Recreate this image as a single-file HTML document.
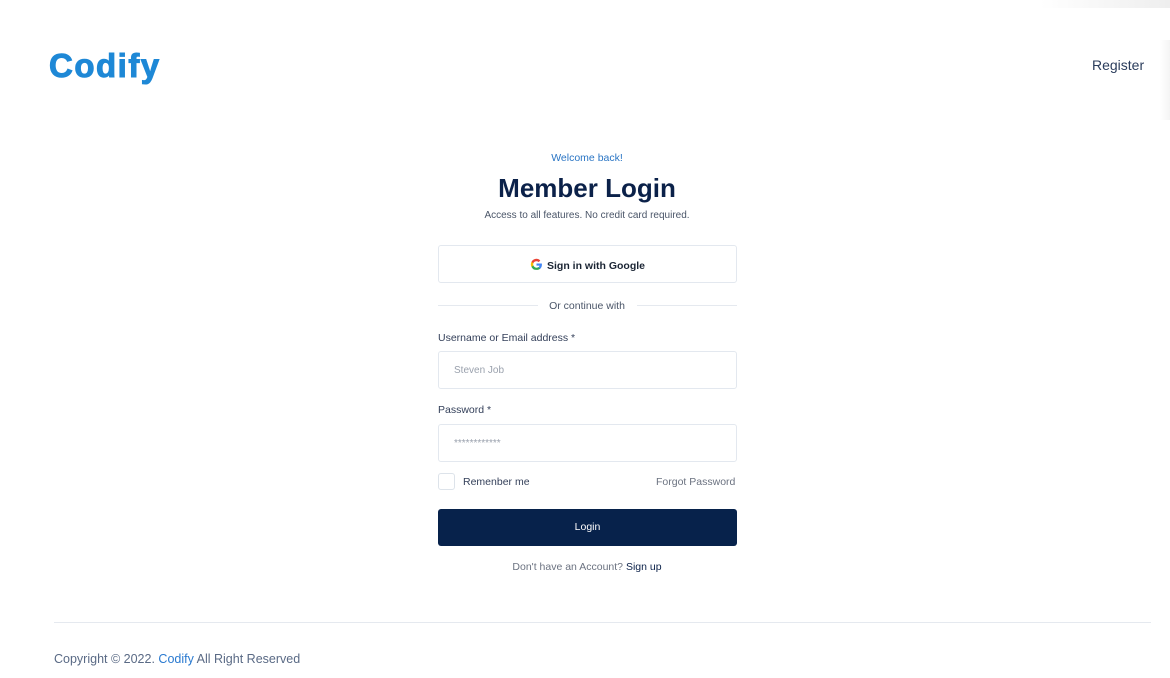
<!DOCTYPE html>
<html><head><meta charset="utf-8"><style>
*{box-sizing:border-box;margin:0;padding:0}
body{width:1170px;height:678px;background:#fff;font-family:"Liberation Sans",sans-serif;position:relative;overflow:hidden;color:#0b2149}
.abs{position:absolute}
.logo{left:49px;top:47px;font-size:33px;font-weight:bold;color:#1e88d6;letter-spacing:1.5px;-webkit-text-stroke:1px #1e88d6}
.reg{left:1092px;top:57px;font-size:14px;color:#2b3d5c}
.c{left:0;width:1174px;text-align:center}
.box{border:1px solid #e3e8ef;border-radius:3px;left:438px;width:299px;height:38px;background:#fff}
.lbl{left:438px;font-size:10.5px;color:#34405a}
.ph{font-size:10px;color:#9aa1ad;left:15px;top:13px;position:absolute}
</style></head><body>
<div class="abs" style="left:1040px;top:0;width:130px;height:8px;background:linear-gradient(90deg,#fff,#eee)"></div>
<div class="abs" style="left:1160px;top:40px;width:10px;height:80px;background:linear-gradient(90deg,#fff,#f4f4f4)"></div>
<div class="abs logo">Codify</div>
<div class="abs reg">Register</div>
<div class="abs c" style="top:152px;font-size:10.5px;color:#2a75c4">Welcome back!</div>
<div class="abs c" style="top:173px;font-size:26px;font-weight:bold;color:#0b2149">Member Login</div>
<div class="abs c" style="top:210px;font-size:10px;color:#4a5568">Access to all features. No credit card required.</div>
<div class="abs box" style="top:245px"><div style="text-align:center;margin-top:12px;font-size:10.5px;font-weight:bold;color:#1a2433"><svg width="13" height="13" viewBox="0 0 24 24" style="vertical-align:-2px;margin-right:4px"><path d="M22 12.2c0-.7-.1-1.4-.2-2H12v3.9h5.6a4.8 4.8 0 0 1-2.1 3.1v2.6h3.4c2-1.8 3.1-4.5 3.1-7.6z" fill="#4285f4"/><path d="M12 22c2.8 0 5.2-.9 6.9-2.5l-3.4-2.6c-.9.6-2.1 1-3.5 1-2.7 0-5-1.8-5.8-4.3H2.7v2.7A10 10 0 0 0 12 22z" fill="#34a853"/><path d="M6.2 13.6a6 6 0 0 1 0-3.8V7.1H2.7a10 10 0 0 0 0 9.2z" fill="#fbbc05"/><path d="M12 6c1.5 0 2.9.5 4 1.5l3-3A10 10 0 0 0 2.7 7.1l3.5 2.7C7 7.4 9.3 6 12 6z" fill="#ea4335"/></svg>Sign in with Google</div></div>
<div class="abs" style="left:438px;top:305px;width:100px;height:1px;background:#e5e9ef"></div>
<div class="abs" style="left:637px;top:305px;width:100px;height:1px;background:#e5e9ef"></div>
<div class="abs c" style="top:300px;font-size:10.5px;color:#4a5568">Or continue with</div>
<div class="abs lbl" style="top:332px">Username or Email address *</div>
<div class="abs box" style="top:351px"><span class="ph">Steven Job</span></div>
<div class="abs lbl" style="top:404px">Password *</div>
<div class="abs box" style="top:424px"><span class="ph">************</span></div>
<div class="abs" style="left:438px;top:473px;width:17px;height:17px;border:1px solid #dde3ea;border-radius:3px"></div>
<div class="abs" style="left:463px;top:476px;font-size:10.5px;color:#34405a">Remenber me</div>
<div class="abs" style="left:656px;top:476px;font-size:10.5px;color:#6b7280">Forgot Password</div>
<div class="abs" style="left:438px;top:509px;width:299px;height:37px;background:#07224b;border-radius:3px;color:#fff;font-size:10.5px;text-align:center;line-height:37px">Login</div>
<div class="abs c" style="top:561px;font-size:10.5px;color:#6b7280">Don't have an Account? <span style="color:#0b2149">Sign up</span></div>
<div class="abs" style="left:54px;top:622px;width:1097px;height:1px;background:#e5e9ef"></div>
<div class="abs" style="left:54px;top:652px;font-size:12.5px;color:#5a6a85">Copyright © 2022. <span style="color:#2a7ad0">Codify</span> All Right Reserved</div>
</body></html>
